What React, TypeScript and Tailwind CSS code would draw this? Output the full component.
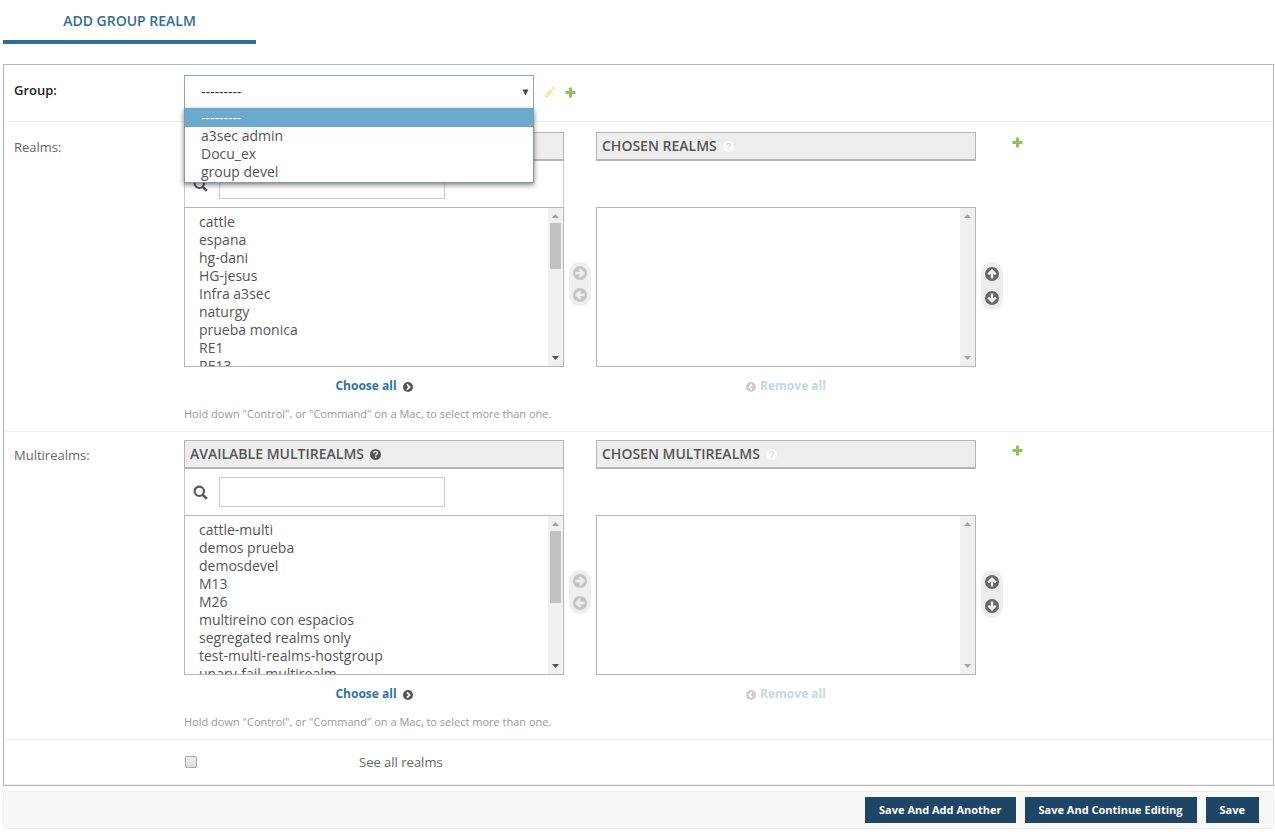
import { useState } from 'react'

const groups = ['---------', 'a3sec admin', 'Docu_ex', 'group devel']

const sections = [
  {
    name: 'Realms',
    items: ['cattle', 'espana', 'hg-dani', 'HG-jesus', 'Infra a3sec', 'naturgy', 'prueba monica', 'RE1', 'RE13'],
    thumb: 'h-[46px]',
  },
  {
    name: 'Multirealms',
    items: [
      'cattle-multi',
      'demos prueba',
      'demosdevel',
      'M13',
      'M26',
      'multireino con espacios',
      'segregated realms only',
      'test-multi-realms-hostgroup',
      'unary-fail-multirealm',
    ],
    thumb: 'h-[72px]',
  },
]

const PlusIcon = () => (
  <svg className="block h-[11px] w-[11px]" viewBox="0 0 11 11" fill="#8fc15c">
    <path d="M4 0.5h3v3.5h3.5v3H7v3.5H4V7H0.5V4H4z" />
  </svg>
)

const PencilIcon = () => (
  <svg className="block h-3 w-3" viewBox="0 0 12 12" fill="#f5e8b4">
    <path d="M0.5 11.5v-3L6.3 2.7l3 3L3.5 11.5zM7 2l1.3-1.3q.6-.5 1.2 0l1.8 1.8q.5.6 0 1.2L10 5z" />
    <path d="M2.2 8.9l1 1" stroke="#fff" strokeWidth="1" />
  </svg>
)

const SearchIcon = () => (
  <svg className="block h-[15px] w-[15px] shrink-0" viewBox="0 0 15 15" fill="none" stroke="#555">
    <circle cx="6.3" cy="6.3" r="4.7" strokeWidth="2.1" />
    <path d="M9.8 9.8l4 4" strokeWidth="2.6" />
  </svg>
)

const HelpIcon = ({ fill, mark }: { fill: string; mark: string }) => (
  <svg className="block h-[11px] w-[11px]" viewBox="0 0 11 11">
    <circle cx="5.5" cy="5.5" r="5.5" fill={fill} />
    <path d="M3.7 4.3C3.7 3 4.5 2.4 5.6 2.4s1.9.7 1.9 1.6c0 1.2-1.8 1.2-1.8 2.6" fill="none" stroke={mark} strokeWidth="1.4" />
    <rect x="4.9" y="7.4" width="1.5" height="1.5" fill={mark} />
  </svg>
)

const turns = {
  up: 'block h-3.5 w-3.5',
  right: 'block h-3.5 w-3.5 rotate-90',
  down: 'block h-3.5 w-3.5 rotate-180',
  left: 'block h-3.5 w-3.5 -rotate-90',
}

const ArrowIcon = ({ to, fill }: { to: keyof typeof turns; fill: string }) => (
  <svg className={turns[to]} viewBox="0 0 14 14">
    <circle cx="7" cy="7" r="7" fill={fill} />
    <path d="M7 11.6V4M3.2 7.4L7 3.6l3.8 3.8" fill="none" stroke="#eee" strokeWidth="2.4" />
  </svg>
)

const ChevronIcon = ({ d, fill }: { d: string; fill: string }) => (
  <svg className="mt-0.5 block h-2.5 w-2.5" viewBox="0 0 10 10">
    <circle cx="5" cy="5" r="5" fill={fill} />
    <path d={d} fill="none" stroke="#fff" strokeWidth="1.7" />
  </svg>
)

const ScrollBar = ({ thumb, end }: { thumb?: string; end: string }) => (
  <div className="flex w-[15px] shrink-0 flex-col items-center bg-[#f0f0f0]" aria-hidden="true">
    <svg className="block h-[15px] w-[15px]" viewBox="0 0 15 15">
      <path d="M4 10l3.5-4L11 10z" fill="#a3a3a3" />
    </svg>
    <div className="flex-1">{thumb && <div className={`w-[11px] bg-[#c1c1c1] ${thumb}`} />}</div>
    <svg className="block h-[15px] w-[15px]" viewBox="0 0 15 15">
      <path d="M4 5l3.5 4L11 5z" fill={end} />
    </svg>
  </div>
)

const listClass =
  'block min-w-0 flex-1 appearance-none bg-white py-1 pl-3.5 text-sm text-[#555] outline-none [scrollbar-width:none]'

const Section = ({ name, items, thumb }: { name: string; items: string[]; thumb: string }) => {
  const id = name.toLowerCase()
  return (
    <div className="flex border-b border-[#eee] px-2.5 py-2">
      <label htmlFor={`${id}-from`} className="w-[170px] shrink-0 pt-1.5 text-[13px] leading-[18px] text-[#666]">
        {name}:
      </label>
      <div>
        <div className="flex items-start gap-[5px]">
          <div className="w-[380px]">
            <h2 className="flex h-[29px] items-center gap-1.5 border border-b-2 border-[#b5b5b5] bg-[#eee] px-[5px] text-sm font-semibold text-[#555] uppercase">
              Available {name}
              <HelpIcon fill="#555" mark="#eee" />
            </h2>
            <div className="flex h-[46px] items-center gap-[11px] border-x border-[#ccc] pl-2">
              <SearchIcon />
              <input type="text" aria-label={`Filter ${id}`} className="h-[30px] w-[226px] border border-[#ccc] bg-white px-2 text-sm outline-none" />
            </div>
            <div className="flex h-40 border border-[#b5b5b5]">
              <select id={`${id}-from`} multiple className={listClass}>
                {items.map((item) => (
                  <option key={item} className="h-[18px] p-0 leading-[18px]">
                    {item}
                  </option>
                ))}
              </select>
              <ScrollBar thumb={thumb} end="#505050" />
            </div>
            <div className="flex h-[37px] items-center justify-center">
              <a href="#" className="flex items-center gap-1.5 text-xs font-bold text-[#2f73a3]">
                Choose all
                <ChevronIcon d="M4 2.4L6.6 5L4 7.6" fill="#555" />
              </a>
            </div>
          </div>

          <div className="mt-[130px] flex w-[22px] flex-col items-center gap-2 rounded-full bg-[#eee] py-1">
            <button type="button" aria-label="Choose">
              <ArrowIcon to="right" fill="#c4c4c4" />
            </button>
            <button type="button" aria-label="Remove">
              <ArrowIcon to="left" fill="#c4c4c4" />
            </button>
          </div>

          <div className="w-[380px]">
            <h2 className="mb-[46px] flex h-[29px] items-center gap-1.5 border border-b-2 border-[#b5b5b5] bg-[#eee] px-[5px] text-sm font-semibold text-[#555] uppercase">
              Chosen {name}
              <HelpIcon fill="#fafafa" mark="#e4e4e4" />
            </h2>
            <div className="flex h-40 border border-[#b5b5b5]">
              <select multiple aria-label={`Chosen ${id}`} className={listClass} />
              <ScrollBar end="#a3a3a3" />
            </div>
            <div className="flex h-[37px] items-center justify-center">
              <a href="#" className="flex items-center gap-1 text-xs font-bold text-[#c3d8e5]">
                <ChevronIcon d="M6 2.4L3.4 5L6 7.6" fill="#ccc" />
                Remove all
              </a>
            </div>
          </div>

          <div className="mt-[130px] flex w-[22px] flex-col items-center gap-2.5 rounded-full bg-[#eee] py-[5px]">
            <button type="button" aria-label="Move up">
              <ArrowIcon to="up" fill="#666" />
            </button>
            <button type="button" aria-label="Move down">
              <ArrowIcon to="down" fill="#666" />
            </button>
          </div>

          <a href="#" aria-label={`Add ${id}`} className="mt-[5px] ml-1">
            <PlusIcon />
          </a>
        </div>
        <p className="py-px text-[11px] leading-[17px] text-[#999]">
          Hold down "Control", or "Command" on a Mac, to select more than one.
        </p>
      </div>
    </div>
  )
}

const App = () => {
  const [group, setGroup] = useState(groups[0])

  return (
    <div className="min-h-screen bg-white pr-px pb-[3px] pl-[3px] font-['Open_Sans',sans-serif]">
      <h1 className="h-11 w-[253px] border-b-4 border-[#346c98] pt-px text-center text-sm leading-10 font-semibold text-[#346c98]">
        ADD GROUP REALM
      </h1>

      <form onSubmit={(e) => e.preventDefault()}>
        <div className="mt-5 border border-[#b5b5b5]">
          {/* Group */}
          <div className="mb-0.5 flex border-b border-[#eee] px-2.5 pt-2.5 pb-3">
            <label htmlFor="group" className="w-[170px] shrink-0 pt-1.5 text-[13px] leading-[18px] font-semibold text-[#222]">
              Group:
            </label>
            <div className="relative w-[350px]">
              <select
                id="group"
                value={group}
                onChange={(e) => setGroup(e.target.value)}
                className="block h-[34px] w-full appearance-none border border-[#8aa9ae] bg-white pl-4 text-sm text-[#333] outline-none"
              >
                {groups.map((g) => (
                  <option key={g}>{g}</option>
                ))}
              </select>
              <svg className="pointer-events-none absolute top-3.5 right-[5px] h-[7px] w-[7px]" viewBox="0 0 7 7">
                <path d="M0.5 0.5h6L3.5 6.5z" fill="#444" />
              </svg>
              <ul className="absolute top-[33px] left-0 z-10 w-full border border-t-0 border-[#7f9ba8] bg-white pb-px text-sm leading-[18px] text-[#555] shadow-[0_2px_5px_rgba(0,0,0,0.5)]">
                {groups.map((g) => (
                  <li
                    key={g}
                    onClick={() => setGroup(g)}
                    className={g === group ? 'bg-[#6ca9ce] pt-px pl-4 text-white' : 'pl-4'}
                  >
                    {g}
                  </li>
                ))}
              </ul>
            </div>
            <div className="ml-2.5 flex items-center gap-[9px]">
              <a href="#" aria-label="Change group">
                <PencilIcon />
              </a>
              <a href="#" aria-label="Add group">
                <PlusIcon />
              </a>
            </div>
          </div>

          {sections.map((s) => (
            <Section key={s.name} {...s} />
          ))}

          {/* See all */}
          <div className="flex h-[45px] items-center border-b border-[#eee] pl-[181px]">
            <input
              id="see-all"
              type="checkbox"
              className="h-3 w-3 appearance-none rounded-xs border border-[#aaa] bg-linear-to-b from-[#eee] to-[#ddd]"
            />
            <label htmlFor="see-all" className="pl-[162px] text-[13px] leading-[18px] text-[#666]">
              See all realms
            </label>
          </div>
        </div>

        <div className="mt-[5px] flex justify-end gap-[9px] rounded border border-[#eee] bg-[#f8f8f8] py-[5px] pr-3.5 text-[11px] font-bold text-white">
          <button type="submit" className="h-[26px] bg-[#1f4566] px-3.5">Save And Add Another</button>
          <button type="submit" className="h-[26px] bg-[#1f4566] px-3.5">Save And Continue Editing</button>
          <button type="submit" className="h-[26px] bg-[#1f4566] px-3.5">Save</button>
        </div>
      </form>
    </div>
  )
}

export default App
